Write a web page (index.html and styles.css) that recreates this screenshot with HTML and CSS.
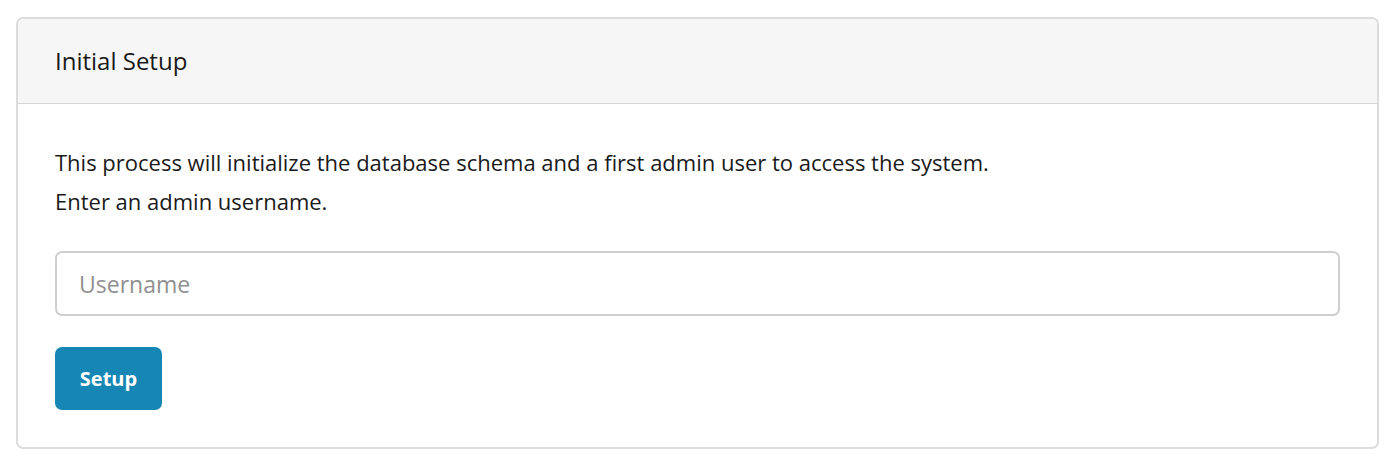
FILE: index.html
```html
<!DOCTYPE html>
<html>
<head>
<meta charset="utf-8">
<link rel="stylesheet" href="styles.css">
</head>
<body>
<div class="card">
  <div class="card-header">Initial Setup</div>
  <div class="card-body">
    <p class="intro">This process will initialize the database schema and a first admin user to access the system.<br>Enter an admin username.</p>
    <input class="field" type="text" placeholder="Username">
    <button class="btn">Setup</button>
  </div>
</div>
</body>
</html>
```
FILE: styles.css
```css
html, body { margin: 0; padding: 0; background: #fff; }
body {
  font-family: "Open Sans", "Noto Sans", sans-serif;
  color: #1a1a1a;
  padding: 17px 21px 16px 16px;
}
.card {
  border: 2px solid #dcdcdc;
  border-radius: 7px;
  overflow: hidden;
  display: flex;
  flex-direction: column;
}
.card-header {
  background: #f6f6f6;
  border-bottom: 1px solid #d6d6d6;
  height: 85px;
  padding: 0 37px 2px 37px;
  display: flex;
  align-items: center;
  font-size: 24px;
  box-sizing: border-box;
}
.card-body {
  padding: 39px 37px 37px 37px;
  display: flex;
  flex-direction: column;
  align-items: flex-start;
}
.intro {
  margin: 0 0 30px 0;
  font-size: 22px;
  line-height: 39px;
}
.field {
  box-sizing: border-box;
  width: 100%;
  height: 65px;
  border: 2px solid #cfcfcf;
  border-radius: 7px;
  padding: 0 22px;
  font-family: inherit;
  font-size: 23px;
  color: #333;
  margin: 0 0 31px 0;
}
.field::placeholder { color: #8f8f8f; }
.btn {
  width: 107px;
  height: 63px;
  background: #1687b4;
  color: #fff;
  border: none;
  border-radius: 7px;
  font-family: inherit;
  font-weight: 700;
  font-size: 20px;
}
```
